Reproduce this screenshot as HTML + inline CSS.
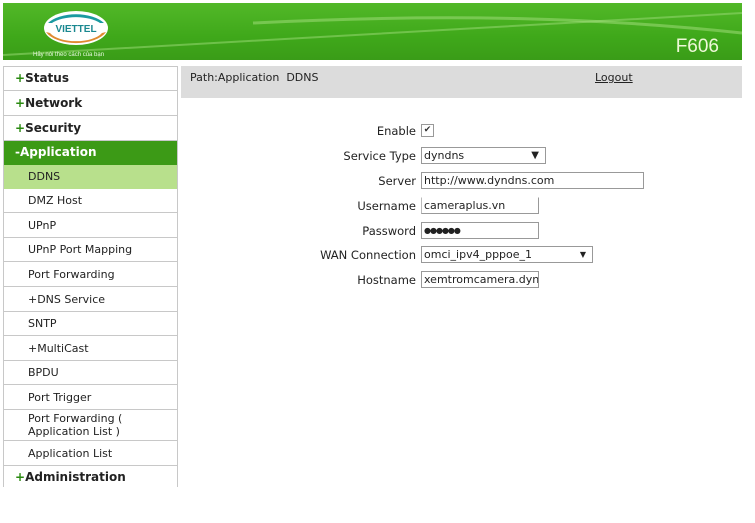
<!DOCTYPE html>
<html><head><style>
body{margin:0;width:755px;height:523px;background:#fff;position:relative;overflow:hidden;font-family:"DejaVu Sans","Liberation Sans",sans-serif;font-size:11px;color:#222}
.a{position:absolute}
#hdr{left:3px;top:3px;width:739px;height:57px;background:linear-gradient(180deg,#52b828 0%,#3fa81a 60%,#3a9c18 100%);overflow:hidden}
#side{left:3px;top:66px;width:175px;height:421px;border:1px solid #c8c8c8;border-bottom:none;box-sizing:border-box}
.it{position:absolute;left:0;width:173px;border-bottom:1px solid #c8c8c8;box-sizing:border-box;padding-left:24px;display:flex;align-items:center;line-height:13px}
.top{padding-left:11px;font-weight:bold;font-size:12px}
.top b{color:#2a8a10}
.lbl{position:absolute;text-align:right;right:339px;font-size:11.5px}
.in{position:absolute;border:1px solid #999;height:17px;box-sizing:border-box;padding-left:2px;line-height:15px;font-size:11px;background:#fff}
</style></head><body>
<div id="hdr" class="a">
<svg width="739" height="57" style="position:absolute;left:0;top:0">
<path d="M0 52 C200 40 400 30 739 10" stroke="#8fd46a" stroke-width="2" fill="none" opacity=".6"/>
<path d="M250 20 C450 10 600 15 739 30" stroke="#a6e080" stroke-width="3" fill="none" opacity=".5"/>
<ellipse cx="73" cy="25" rx="32" ry="17" fill="#fff"/>
<path d="M43 29 A32 17 0 0 0 103 29 L99 30 A28 13 0 0 1 47 30Z" fill="#e08a30"/>
<path d="M45 20 A32 17 0 0 1 101 20 L97 20 A28 12 0 0 0 49 20Z" fill="#1a9aa0"/>
<text x="73" y="29" font-size="10" font-weight="bold" fill="#1a8890" text-anchor="middle" font-family="Liberation Sans">VIETTEL</text>
<text x="30" y="53" font-size="6" fill="#e8f8e0" font-family="Liberation Sans">Hãy nói theo cách của bạn</text>
<text x="716" y="49" font-size="19" fill="#eef8d8" text-anchor="end" font-family="Liberation Sans">F606</text>
</svg>
</div>
<div id="side" class="a">
<div class="it top" style="top:0;height:24px"><b>+</b>Status</div>
<div class="it top" style="top:24px;height:25px"><b>+</b>Network</div>
<div class="it top" style="top:49px;height:25px"><b>+</b>Security</div>
<div class="it top" style="top:74px;height:24px;background:#3c9a16;color:#fff;border-color:#3c9a16">-Application</div>
<div class="it" style="top:98px;height:24px;background:#b8e08c;border-color:#b8e08c">DDNS</div>
<div class="it" style="top:122px;height:24px">DMZ Host</div>
<div class="it" style="top:146px;height:25px">UPnP</div>
<div class="it" style="top:171px;height:24px">UPnP Port Mapping</div>
<div class="it" style="top:195px;height:25px">Port Forwarding</div>
<div class="it" style="top:220px;height:25px">+DNS Service</div>
<div class="it" style="top:245px;height:24px">SNTP</div>
<div class="it" style="top:269px;height:25px">+MultiCast</div>
<div class="it" style="top:294px;height:24px">BPDU</div>
<div class="it" style="top:318px;height:25px">Port Trigger</div>
<div class="it" style="top:343px;height:31px">Port Forwarding (<br>Application List )</div>
<div class="it" style="top:374px;height:25px">Application List</div>
<div class="it top" style="top:399px;height:22px;border:none"><b>+</b>Administration</div>
</div>
<div class="a" style="left:181px;top:66px;width:561px;height:32px;background:#dcdcdc"></div>
<div class="a" style="left:190px;top:71px">Path:Application&nbsp; DDNS</div>
<div class="a" style="left:595px;top:71px;text-decoration:underline">Logout</div>

<div class="lbl" style="top:124px">Enable</div>
<div class="a" style="left:421px;top:124px;width:11px;height:11px;border:1px solid #999;font-size:9px;line-height:11px;text-align:center;color:#333">✔</div>
<div class="lbl" style="top:149px">Service Type</div>
<div class="in" style="left:421px;top:147px;width:125px">dyndns<span style="position:absolute;right:6px;font-size:10px">▼</span></div>
<div class="lbl" style="top:174px">Server</div>
<div class="in" style="left:421px;top:172px;width:223px">http://www.dyndns.com</div>
<div class="lbl" style="top:199px">Username</div>
<div class="in" style="left:421px;top:197px;width:118px;border-top-color:#fff;border-left-color:#bbb">cameraplus.vn</div>
<div class="lbl" style="top:224px">Password</div>
<div class="in" style="left:421px;top:222px;width:118px;font-size:8px;letter-spacing:-1px">●●●●●●</div>
<div class="lbl" style="top:248px">WAN Connection</div>
<div class="in" style="left:421px;top:246px;width:172px">omci_ipv4_pppoe_1<span style="position:absolute;right:6px;font-size:8px">▼</span></div>
<div class="lbl" style="top:273px">Hostname</div>
<div class="in" style="left:421px;top:271px;width:118px;overflow:hidden;white-space:nowrap">xemtromcamera.dyn</div>
</body></html>
